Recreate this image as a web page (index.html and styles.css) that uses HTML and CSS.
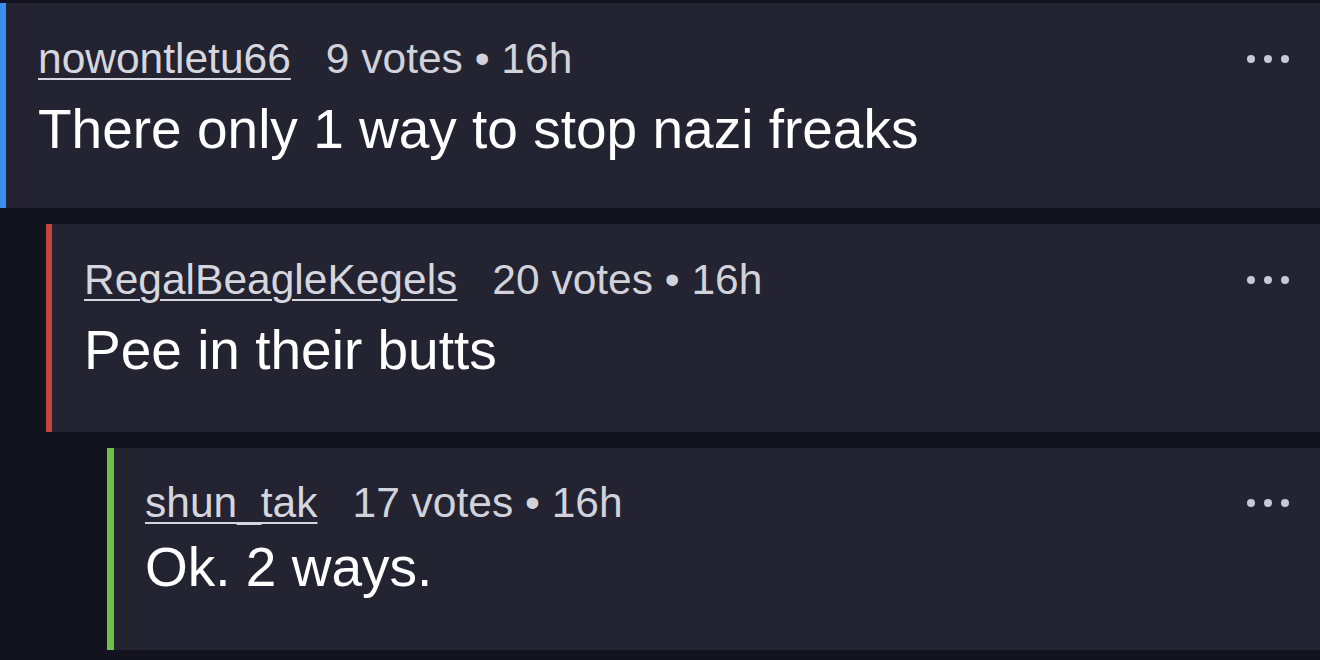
FILE: index.html
```html
<!DOCTYPE html>
<html lang="en">
<head>
<meta charset="utf-8">
<title>Comments</title>
<link rel="stylesheet" href="styles.css">
</head>
<body>
<div class="thread">
  <div class="comment comment--blue comment--d0">
    <div class="comment__head">
      <a class="comment__user" href="#">nowontletu66</a>
      <span class="comment__meta">9 votes • 16h</span>
      <span class="comment__more"><i></i><i></i><i></i></span>
    </div>
    <div class="comment__body">There only 1 way to stop nazi freaks</div>
  </div>
  <div class="replies replies--d1">
    <div class="comment comment--red comment--d1">
      <div class="comment__head">
        <a class="comment__user" href="#">RegalBeagleKegels</a>
        <span class="comment__meta">20 votes • 16h</span>
        <span class="comment__more"><i></i><i></i><i></i></span>
      </div>
      <div class="comment__body">Pee in their butts</div>
    </div>
    <div class="replies replies--d2">
      <div class="comment comment--green comment--d2">
        <div class="comment__head">
          <a class="comment__user" href="#">shun_tak</a>
          <span class="comment__meta">17 votes • 16h</span>
          <span class="comment__more"><i></i><i></i><i></i></span>
        </div>
        <div class="comment__body">Ok. 2 ways.</div>
      </div>
    </div>
  </div>
</div>
</body>
</html>
```

FILE: styles.css
```css
html, body {
  margin: 0;
  padding: 0;
  background: #12131f;
  height: 100%;
  overflow: hidden;
}

body {
  font-family: "Liberation Sans", Arial, sans-serif;
  padding-top: 3px;
  box-sizing: border-box;
}

.thread {
  display: flex;
  flex-direction: column;
  gap: 16px;
}

.replies {
  display: flex;
  flex-direction: column;
  gap: 16px;
}

.replies--d1 {
  margin-left: 46px;
}

.replies--d2 {
  margin-left: 61px;
}

.comment {
  background: #232332;
  border-left: 6px solid #3b8ef0;
  padding: 28px 31px 0 32px;
  box-sizing: border-box;
}

.comment--blue { border-left-color: #3b8ef0; }
.comment--red { border-left-color: #c2443b; }
.comment--green { border-left-color: #6cc24a; border-left-width: 7px; padding-left: 31px; }

.comment--d0 { height: 205px; }
.comment--d1 { height: 208px; }
.comment--d2 { height: 202px; padding-top: 27px; }

.comment__head {
  display: flex;
  align-items: center;
  height: 56px;
  font-size: 42.5px;
  line-height: 56px;
}

.comment__user {
  color: #d6d6de;
  text-decoration: underline;
  text-decoration-thickness: 2px;
  text-underline-offset: 5px;
}

.comment__meta {
  color: #d2d2da;
  margin-left: 35px;
}

.comment__more {
  margin-left: auto;
  display: flex;
  gap: 9px;
  align-items: center;
}

.comment__more i {
  display: block;
  width: 8px;
  height: 8px;
  border-radius: 50%;
  background: #c8c8d4;
}

.comment__body {
  margin-top: 2px;
  color: #ffffff;
  font-size: 55px;
  line-height: 80px;
}

.comment--d2 .comment__body {
  margin-top: -4px;
}
```
